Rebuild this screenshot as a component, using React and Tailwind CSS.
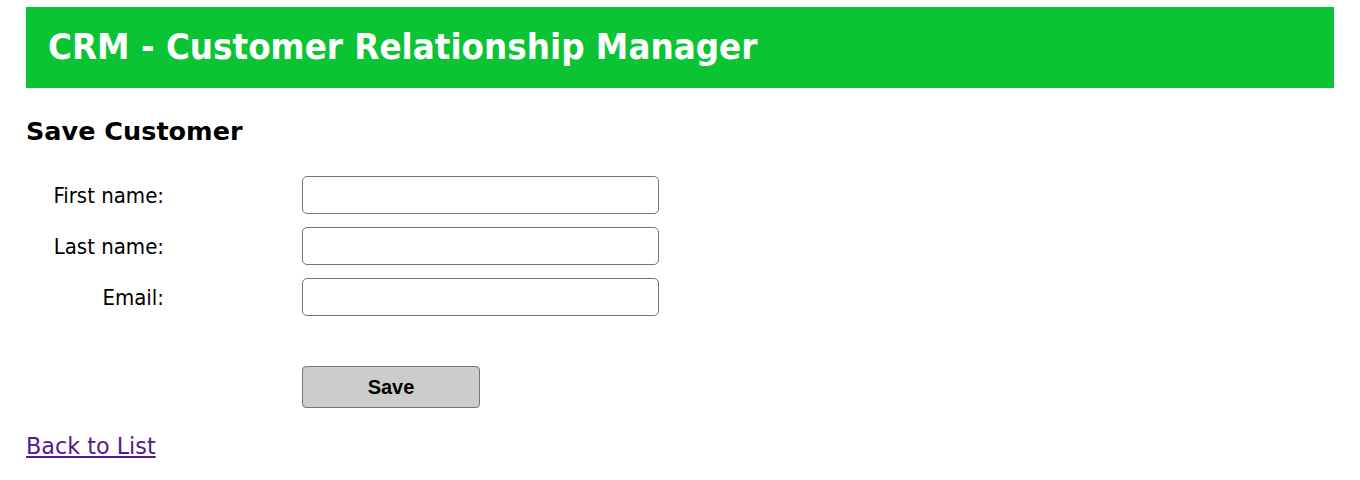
import React from 'react';

const fields = [
  { label: 'First name:', name: 'firstName' },
  { label: 'Last name:', name: 'lastName' },
  { label: 'Email:', name: 'email' },
];

export default function App() {
  return (
    <div className="px-[26px] pt-[7px] bg-white min-h-screen" style={{ fontFamily: '"DejaVu Sans", sans-serif' }}>
      <header className="h-[81px] bg-[#0ac434] flex items-center px-[22px]">
        <h1 className="text-white font-bold text-[36.3px] leading-none [font-family:'DejaVu_Sans_Condensed','DejaVu_Sans',sans-serif]">
          CRM - Customer Relationship Manager
        </h1>
      </header>

      <h2 className="mt-[26px] font-bold text-[25.5px] leading-[34px] text-black">Save Customer</h2>

      <form className="mt-[28px] flex flex-col gap-[13px]" onSubmit={e => e.preventDefault()}>
        {fields.map(f => (
          <div key={f.name} className="flex items-center">
            <label
              htmlFor={f.name}
              className="w-[138px] text-right text-[22px] text-black [font-family:'DejaVu_Sans_Condensed','DejaVu_Sans',sans-serif]"
            >
              {f.label}
            </label>
            <input
              id={f.name}
              type="text"
              className="ml-[138px] w-[357px] h-[38px] border border-[#767676] rounded-[5px] bg-white px-2"
            />
          </div>
        ))}
        <div className="flex mt-[37px]">
          <button
            type="submit"
            className="ml-[276px] w-[178px] h-[42px] bg-[#cccccc] border border-[#767676] rounded-[4px] font-bold text-[20px] text-black [font-family:'Liberation_Sans',Arial,sans-serif]"
          >
            Save
          </button>
        </div>
      </form>

      <a href="#" className="inline-block mt-[22px] text-[22.3px] text-[#551a8b] underline">
        Back to List
      </a>
    </div>
  );
}
